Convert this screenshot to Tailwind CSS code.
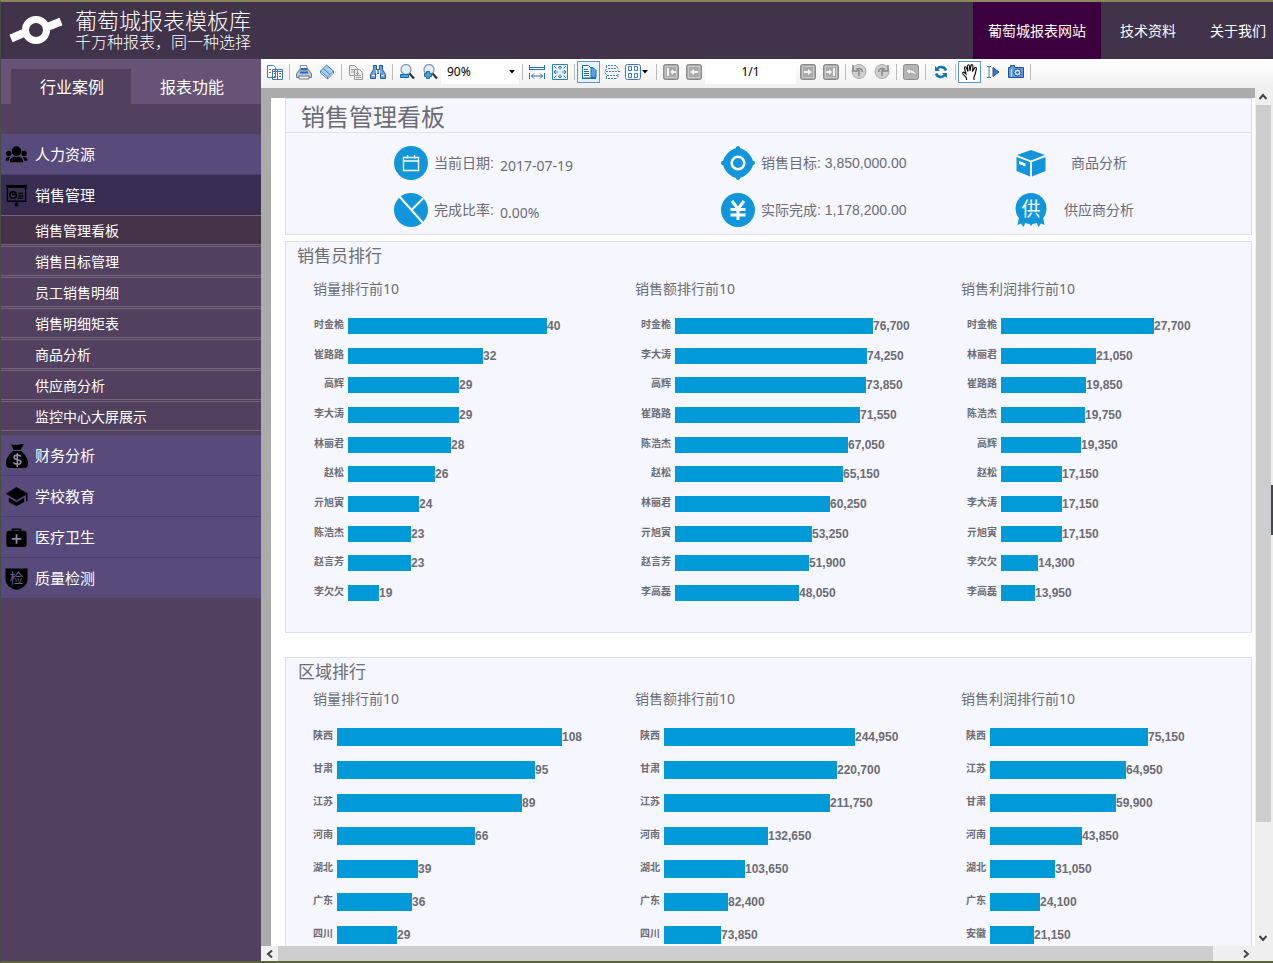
<!DOCTYPE html>
<html lang="zh-CN">
<head>
<meta charset="utf-8">
<title>葡萄城报表模板库</title>
<script src="https://cdn.jsdelivr.net/npm/@tailwindcss/browser@4"></script>
</head>
<body class="relative flex h-screen flex-col overflow-hidden border-t-2 border-b-2 border-l border-t-[#8c8560] border-b-[#5a6338] border-l-[#4a4a48] bg-[#52405f] font-['Noto_Sans','Noto_Sans_CJK_SC',sans-serif] text-sm text-white">

<header class="flex h-[57px] shrink-0 items-stretch justify-between bg-[#413349]">
  <div class="flex items-center gap-3 pl-2">
    <svg class="h-8 w-[54px]" viewBox="0 0 54 32" fill="none" stroke="#fff"><circle cx="27" cy="15" r="10.500" stroke-width="7"/><path d="M2 23.500 17 17M37 12.500 52 6.500" stroke-width="8"/></svg>
    <div class="pb-1 font-['Noto_Sans_CJK_SC',sans-serif] font-light">
      <h1 class="text-[22px] leading-6">葡萄城报表模板库</h1>
      <p class="text-base leading-5">千万种报表，同一种选择</p>
    </div>
  </div>
  <nav class="flex pr-[7px]">
    <a href="#" class="flex items-center bg-[#3d003f] px-[15px]">葡萄城报表网站</a>
    <a href="#" class="ml-[19px] flex items-center">技术资料</a>
    <a href="#" class="ml-[34px] flex items-center">关于我们</a>
  </nav>
</header>

<div class="flex min-h-0 flex-1">
  <aside class="w-[260px] shrink-0 bg-[#52405f]">
    <div class="flex bg-[#665376] px-[10px] pt-[10px] text-base">
      <button class="h-[35px] flex-1 bg-[#52405f] pl-[2px]">行业案例</button>
      <button class="h-[35px] flex-1 pl-[2px]">报表功能</button>
    </div>
    <nav class="pt-[30px] text-[15px]">
      <a href="#" class="flex h-[41px] items-center gap-[7px] border-b border-[#4d3f6b] bg-[#584a7a] pt-px pl-1">
        <svg class="size-[23px]" viewBox="0 0 24 24"><circle cx="12" cy="8.500" r="5"/><circle cx="4" cy="11" r="2.800"/><circle cx="20" cy="11" r="2.800"/><path d="M5 20c0-5 3-5 5-6l2 1 2-1c2 1 5 1 5 6zM.5 18.500c0-3 1-4 4-4l1 .5c-1 1-1.500 2-1.500 3.500zM23.500 18.500c0-3-1-4-4-4l-1 .5c1 1 1.500 2 1.500 3.500z"/></svg>人力资源</a>
      <a href="#" class="flex h-[40px] items-center gap-[7px] bg-[#392d52] pt-px pl-1">
        <svg class="size-[23px]" viewBox="0 0 24 24" fill="none" stroke="#000" stroke-width="1.500"><path d="M1 2.500h22" stroke-width="3"/><path d="M2.500 4v14h19V4M12 18v3M14 10h5M14 12.500h5M13 15h6M8 7.500V11h3.500"/><circle cx="8.500" cy="11.500" r="3.500"/><circle cx="12" cy="21.500" r="1.200"/></svg>销售管理</a>
      <div class="flex flex-col gap-px pb-1 text-sm">
        <a href="#" class="flex h-[30px] items-center border-y border-[#71657a] bg-[#453349] pt-px pl-[34px]">销售管理看板</a>
        <a href="#" class="flex h-[30px] items-center border-y border-[#71657a] pt-px pl-[34px]">销售目标管理</a>
        <a href="#" class="flex h-[30px] items-center border-y border-[#71657a] pt-px pl-[34px]">员工销售明细</a>
        <a href="#" class="flex h-[30px] items-center border-y border-[#71657a] pt-px pl-[34px]">销售明细矩表</a>
        <a href="#" class="flex h-[30px] items-center border-y border-[#71657a] pt-px pl-[34px]">商品分析</a>
        <a href="#" class="flex h-[30px] items-center border-y border-[#71657a] pt-px pl-[34px]">供应商分析</a>
        <a href="#" class="flex h-[30px] items-center border-y border-[#71657a] pt-px pl-[34px]">监控中心大屏展示</a>
      </div>
      <a href="#" class="flex h-[41px] items-center gap-[7px] border-b border-[#4d3f6b] bg-[#584a7a] pt-px pl-1">
        <svg class="-mr-px size-[24px]" viewBox="0 0 24 24"><path d="M6 0c2 1.500 3 .5 5 1 3-.5 5-1 8-1l-3.500 6h-7z"/><path d="M8 7h8c4 3 7 8 7 12 0 3-1 5-4 5H5c-3 0-4-2-4-5 0-4 3-9 7-12z"/><path d="M16 12.500c-1-2-7-2-7 .8 0 3.200 7 1.600 7 4.700 0 3-6.500 3-7.500.3M12.300 9v14" fill="none" stroke="#8f86a8" stroke-width="1.600"/></svg>财务分析</a>
      <a href="#" class="flex h-[41px] items-center gap-[7px] border-b border-[#4d3f6b] bg-[#584a7a] pt-px pl-1">
        <svg class="size-[23px]" viewBox="0 0 24 24"><path d="M12 2 24 9l-12 7L1 9z"/><path d="M4 13v5l8 4 8-4v-5l-8 5zM22 9h1.500v8H22z"/></svg>学校教育</a>
      <a href="#" class="flex h-[41px] items-center gap-[7px] border-b border-[#4d3f6b] bg-[#584a7a] pt-px pl-1">
        <svg class="size-[23px]" viewBox="0 0 24 24"><path d="M8 6V3.500h8V6" fill="none" stroke="#000" stroke-width="2"/><rect x="1.500" y="5" width="21" height="17" rx="3"/><path d="M12 8.500v10M7 13.500h10" stroke="#8f86a8" stroke-width="1.800"/></svg>医疗卫生</a>
      <a href="#" class="flex h-[41px] items-center gap-[7px] border-b border-[#4d3f6b] bg-[#584a7a] pt-px pl-1">
        <svg class="size-[23px]" viewBox="0 0 24 24"><path d="M.5 1.500c5 0 18 0 23 0V12c0 6-4 10-11.500 12C4.500 22 .5 18 .5 12z"/><text x="12" y="17" text-anchor="middle" font-size="14" fill="#6c6090">检</text></svg>质量检测</a>
    </nav>
  </aside>

  <main class="flex min-w-0 flex-1 flex-col bg-[#ababab]">
    <div class="flex h-[29px] shrink-0 items-center bg-linear-to-b from-white to-[#f0f0f0] pb-1 pl-[2px] text-black" id="toolbar">
      <button aria-label="侧边栏" class="flex h-[22px] w-[23px] items-center justify-center"><svg class="size-4" viewBox="0 0 16 16" fill="#fff" stroke="#3d78bd"><path d="M.5 1.500h6l2 2v10h-8zM5.500 5.500h10v10h-10zM10.500 6v9M5.500 7.500h10" /><path d="M2 5.500h2M2 8.500h2M12 9.500h2M7 9.500h2M7 12.500h2M12 12.500h2" stroke="#8a6a6a"/></svg></button>
      <i class="mx-[3px] h-4 w-px bg-[#bcbcbc]"></i>
      <button aria-label="打印" class="flex h-[22px] w-[22px] items-center justify-center"><svg class="size-4" viewBox="0 0 16 16"><path d="M4.500 1.500h6l1.500 5H4z" fill="#fff" stroke="#6c8bb8"/><path d="M3 6h10l2.500 4v3.500H.5V10z" fill="#bcc5d1" stroke="#6e7b8d"/><path d="M4 8.500h8M5 5h6" stroke="#2868c0" stroke-width="2"/><path d="M3 12h10v3H3z" fill="#eef2f8" stroke="#6e7b8d"/></svg></button>
      <button aria-label="页面设置" class="flex h-[22px] w-[23px] items-center justify-center"><svg class="size-4" viewBox="0 0 16 16" fill="#a9cff0" stroke="#4c84bd"><path d="M1.500 7 7.500 1l7 6-6 6z"/><path d="m1.500 7v2l7 6v-2M8.500 15l6-6V7M4 4.500l7 6" fill="none"/></svg></button>
      <i class="mr-[2px] ml-[3px] h-4 w-px bg-[#bcbcbc]"></i>
      <button aria-label="复制" class="flex h-[22px] w-[23px] items-center justify-center"><svg class="size-4" viewBox="0 0 16 16" fill="#eee" stroke="#999"><path d="M1.500 1.500h5l3 3v7h-8zM6.500 5.500h5l3 3v7h-8z"/><path d="M3 5.500h3M3 8h3M8 9.500h3M8 11.500h5M8 13.500h5"/></svg></button>
      <button aria-label="查找" class="flex h-[22px] w-[22px] items-center justify-center"><svg class="size-4" viewBox="0 0 16 16" fill="#6ea3dc" stroke="#2258a0"><path d="M3.500 1.500h3v4h3v-4h3v4l3 5v4h-5v-5h-5v5h-5v-4l3-5z"/><path d="M2 11.500h3M11 11.500h3M6.500 6v4M9.500 6v4" stroke="#fff"/></svg></button>
      <i class="mr-[2px] ml-[3px] h-4 w-px bg-[#bcbcbc]"></i>
      <button aria-label="缩小" class="flex h-[22px] w-[23px] items-center justify-center"><svg class="size-4" viewBox="0 0 16 16"><circle cx="7" cy="5.500" r="5" fill="#e3eefb" stroke="#8d9db1" stroke-width="1.300"/><path d="m10.500 9.500 4.500 5" stroke="#333" stroke-width="2.200"/><path d="M1.500 10.500h8v3h-8z" fill="#4aa5df" stroke="#1667a5"/></svg></button>
      <button aria-label="放大" class="flex h-[22px] w-[23px] items-center justify-center"><svg class="size-4" viewBox="0 0 16 16"><circle cx="7" cy="5.500" r="5" fill="#e3eefb" stroke="#8d9db1" stroke-width="1.300"/><path d="m10.500 9.500 4.500 5" stroke="#333" stroke-width="2.200"/><path d="M4.500 7.500h3v2h2v3h-2v2h-3v-2h-2v-3h2z" fill="#4aa5df" stroke="#1667a5"/></svg></button>
      <label class="relative flex h-[25px] w-[78px] items-center bg-white">
        <select aria-label="缩放" class="w-full appearance-none bg-transparent pl-[6px] text-xs outline-none"><option>90%</option><option>100%</option></select>
        <svg class="absolute right-1 h-1 w-[6px]" viewBox="0 0 6 4"><path d="M0 0h6L3 3.500z"/></svg>
      </label>
      <i class="mr-[2px] ml-[3px] h-4 w-px bg-[#bcbcbc]"></i>
      <button aria-label="适合宽度" class="flex h-[22px] w-[23px] items-center justify-center"><svg class="size-4" viewBox="0 0 16 16" fill="none" stroke="#2a6dab"><path d="M.5 1v5M15.500 1v5M.5 3.500h15M.5 5.500h15M.5 9v6M15.500 9v6M2 12h12M5 9.500 2.500 12 5 14.500M11 9.500l2.500 2.500-2.500 2.500"/></svg></button>
      <button aria-label="适合页面" class="flex h-[22px] w-[23px] items-center justify-center"><svg class="size-4" viewBox="0 0 16 16" fill="#e8f4fd" stroke="#2a7dbb"><path d="M.5.5h15v15H.5z"/><path d="M8 2v4M6 4l2-2 2 2M8 14v-4M6 12l2 2 2-2M2 8h4M4 6 2 8l2 2M14 8h-4M12 6l2 2-2 2M2 2l2.500 2.500M14 2l-2.500 2.500M2 14l2.500-2.500M14 14l-2.500-2.500"/></svg></button>
      <i class="mr-[2px] ml-[3px] h-4 w-px bg-[#bcbcbc]"></i>
      <button aria-label="单页视图" class="flex h-[22px] w-[23px] items-center justify-center border border-[#5a97d8] bg-[#e8f2fc]"><svg class="size-4" viewBox="0 0 16 16" fill="#fff" stroke="#1f68ad"><path d="M9 3.500h3l3 3v7H9z" fill="#56a5e0"/><path d="M1.500 1.500h6l2.500 2.500v10H1.500z"/><path d="M3 5.500h4M3 7.500h5M3 9.500h5M3 11.500h5M1 14.500h14"/></svg></button>
      <button aria-label="连续视图" class="flex h-[22px] w-[23px] items-center justify-center"><svg class="size-4" viewBox="0 0 16 16" fill="none" stroke="#4b7fd0"><path d="M2.500 1v3.500l-2 3.500 2 3v4M12.500 2l1.500 2.500v2M14 10v3l-1.500 1.500" stroke-dasharray="3 1"/><path d="M4 1.500h8M4 4.500h9M2 7.500h14M3 11.500h10M4 14.500h8" stroke-dasharray="2 1"/></svg></button>
      <button aria-label="多页视图" class="flex h-[22px] w-[27px] items-center justify-center gap-px"><svg class="size-4" viewBox="0 0 16 16" fill="#fff" stroke="#3f74c4"><rect x=".5" y=".5" width="15" height="15" rx="2"/><path d="M3.500 2.500h3v4h-3zM9.500 2.500h3v4h-3zM3.500 9.500h3v4h-3zM9.500 9.500h3v4h-3z"/></svg><svg class="h-1 w-[6px]" viewBox="0 0 6 4"><path d="M0 0h6L3 3.500z"/></svg></button>
      <i class="mr-[2px] ml-[6px] h-4 w-px bg-[#bcbcbc]"></i>
      <button aria-label="首页" class="flex h-[22px] w-[23px] items-center justify-center"><svg class="size-4" viewBox="0 0 16 16"><rect x=".5" y=".5" width="15" height="15" rx="2" fill="#a9a9a9" stroke="#888"/><path d="M2.500 2.500h11v11h-11z" fill="none" stroke="#c8c8c8"/><path d="M4 4h2v8H4zM7 8l3-3v2h3v2h-3v2z" fill="#f2f2f2"/></svg></button>
      <button aria-label="上一页" class="flex h-[22px] w-[23px] items-center justify-center"><svg class="size-4" viewBox="0 0 16 16"><rect x=".5" y=".5" width="15" height="15" rx="2" fill="#a9a9a9" stroke="#888"/><path d="M2.500 2.500h11v11h-11z" fill="none" stroke="#c8c8c8"/><path d="m4 8 4-3v2h4v2H8v2z" fill="#f2f2f2"/></svg></button>
      <input aria-label="页码" value="1/1" class="h-[25px] w-[91px] bg-white text-center text-xs outline-none">
      <button aria-label="下一页" class="flex h-[22px] w-[23px] items-center justify-center"><svg class="size-4" viewBox="0 0 16 16"><rect x=".5" y=".5" width="15" height="15" rx="2" fill="#a9a9a9" stroke="#888"/><path d="M2.500 2.500h11v11h-11z" fill="none" stroke="#c8c8c8"/><path d="M12 8 8 5v2H4v2h4v2z" fill="#f2f2f2"/></svg></button>
      <button aria-label="末页" class="flex h-[22px] w-[23px] items-center justify-center"><svg class="size-4" viewBox="0 0 16 16"><rect x=".5" y=".5" width="15" height="15" rx="2" fill="#a9a9a9" stroke="#888"/><path d="M2.500 2.500h11v11h-11z" fill="none" stroke="#c8c8c8"/><path d="M10 4h2v8h-2zM9 8 6 5v2H3v2h3v2z" fill="#f2f2f2"/></svg></button>
      <i class="mr-[2px] ml-[3px] h-4 w-px bg-[#bcbcbc]"></i>
      <button aria-label="后退" class="flex h-[22px] w-[22px] items-center justify-center"><svg class="size-4" viewBox="0 0 16 16"><circle cx="8" cy="7.500" r="7" fill="#cfcfcf" stroke="#aaa"/><path d="M2 1v6h6L6 5c3-1.500 5 0 5.500 3M8 8v4" fill="none" stroke="#888" stroke-width="1.500"/></svg></button>
      <button aria-label="前进" class="flex h-[22px] w-[23px] items-center justify-center"><svg class="size-4" viewBox="0 0 16 16"><circle cx="8" cy="7.500" r="7" fill="#cfcfcf" stroke="#aaa"/><path d="M14 1v6H8l2-2C7 3.500 5 5 4.500 8M8 8v4" fill="none" stroke="#888" stroke-width="1.500"/></svg></button>
      <i class="mx-[3px] h-4 w-px bg-[#bcbcbc]"></i>
      <button aria-label="返回父报表" class="flex h-[22px] w-[22px] items-center justify-center"><svg class="size-4" viewBox="0 0 16 16"><rect x=".5" y=".5" width="15" height="15" rx="2" fill="#b4b4b4" stroke="#8e8e8e"/><path d="m3 7 4-3v2c4 0 6 2 6 6-1-2-3-3-6-3v2z" fill="#f2f2f2" stroke="#8e8e8e" stroke-width=".6"/></svg></button>
      <i class="mx-[3px] h-4 w-px bg-[#bcbcbc]"></i>
      <button aria-label="刷新" class="flex h-[22px] w-[23px] items-center justify-center"><svg class="size-4" viewBox="0 0 16 16" fill="none" stroke="#1b74ad" stroke-width="2.600"><path d="M13 6.500C11.500 2.500 6.500 2 4 5M3 9.500c1.500 4 6.500 4.500 9 1.500"/><path d="M2 2v5h5zM14 14V9H9z" fill="#1b74ad" stroke="none"/></svg></button>
      <i class="mr-[2px] ml-[3px] h-4 w-px bg-[#bcbcbc]"></i>
      <button aria-label="手形工具" class="flex h-[22px] w-[23px] items-center justify-center border border-[#5a97d8] bg-white"><svg class="h-[18px] w-[18px]" viewBox="0 0 18 18" fill="#fff" stroke="#000" stroke-width="1.100"><path d="M5.500 17v-2L2 11c-1-1.500.5-2.500 1.500-1.500L5 11 3.500 5c0-1.600 1.500-1.600 2 0L7 8.500 6.500 3c.2-1.600 1.800-1.600 2 0L9 8l1-5.500c.4-1.400 2-1 2 .5L11.500 8.500 13.500 5c.8-1.200 2.200-.5 1.800 1-.8 3-.5 5-2.300 8v3"/></svg></button>
      <button aria-label="文本选择" class="flex h-[22px] w-[23px] items-center justify-center"><svg class="size-4" viewBox="0 0 16 16"><path d="M2 2.500h2M6 2.500H4v11h2M2 13.500h2" fill="none" stroke="#5a7aa0"/><path d="M8 3.500 14 8l-6 4.500z" fill="#3f7cc4" stroke="#24538e"/></svg></button>
      <button aria-label="快照工具" class="flex h-[22px] w-[23px] items-center justify-center"><svg class="size-4" viewBox="0 0 16 16"><path d="M.5 3.500h2v-2h4v2h9v10H.5z" fill="#5f9cdf" stroke="#1f5299"/><circle cx="9.500" cy="8.500" r="3.500" fill="#d3e6fa" stroke="#1f5299"/><circle cx="9.500" cy="8.500" r="1.200" fill="#1f5299"/><path d="M3.500 5v8" stroke="#cfe3fa"/></svg></button>
      <i class="mx-[3px] h-4 w-px bg-[#bcbcbc]"></i>
    </div>

    <div class="flex min-h-0 flex-1">
      <div class="min-w-0 flex-1 overflow-hidden pt-[10px] pl-[10px]">
        <div class="h-full bg-white pr-[3px] pl-[14px] text-[#6c6c74]">

          <section class="mb-[6px] border border-[#dedee8] bg-[#f6f6fe]">
            <h2 class="h-[34px] border-b border-[#e2e2ec] pl-[15px] font-['Noto_Sans_CJK_SC',sans-serif] text-2xl leading-[34px]">销售管理看板</h2>
            <div class="grid grid-cols-[327fr_293fr_237fr] gap-y-[13px] pt-[13px] pb-[7px] pl-[108px] font-['Liberation_Sans','Noto_Sans_CJK_SC',sans-serif]">
              <div class="flex items-center gap-[6px]">
                <svg class="size-[34px]" viewBox="0 0 34 34" fill="none" stroke="#fff" stroke-width="1.400"><circle cx="17" cy="17" r="17" fill="#1296db" stroke="none"/><path d="M9.500 11.500h15v13h-15zM9.500 15h15M13.500 9v3.500M20.500 9v3.500"/></svg>
                当前日期: <span class="pt-[6px] font-['Noto_Sans',sans-serif]">2017-07-19</span></div>
              <div class="flex items-center gap-[6px]">
                <svg class="size-[34px]" viewBox="0 0 34 34" fill="none"><path d="M17 0c1.500 0 2 1 2.200 2.200C24 3 31 10 31.800 14.800 33 15 34 15.500 34 17s-1 2-2.200 2.200C31 24 24 31 19.200 31.800 19 33 18.500 34 17 34s-2-1-2.200-2.200C10 31 3 24 2.200 19.200 1 19 0 18.500 0 17s1-2 2.200-2.200C3 10 10 3 14.800 2.200 15 1 15.500 0 17 0z" fill="#1296db"/><circle cx="17" cy="17" r="14" fill="#1296db"/><circle cx="17" cy="17" r="6.300" stroke="#fff" stroke-width="2.600"/></svg>
                销售目标: 3,850,000.00</div>
              <div class="flex items-center">
                <svg class="size-[34px]" viewBox="0 0 34 34" fill="#1296db"><path d="M17 4 31 9 17 14.500 3 9zM2.500 11 16 16v14.500L2.500 25zM31.500 11 18 16v14.500L31.500 25z"/><path d="m5 15 6.500 2.500v3L5 18z" fill="#fff"/></svg>
                <a href="#" class="ml-[23px]">商品分析</a></div>
              <div class="flex items-center gap-[6px]">
                <svg class="size-[34px]" viewBox="0 0 34 34" fill="none" stroke="#fff" stroke-width="2"><circle cx="17" cy="17" r="17" fill="#1296db" stroke="none"/><path d="m5 3 24 27M17.500 17 29 5.500"/></svg>
                完成比率: <span class="pt-[6px] font-['Noto_Sans',sans-serif]">0.00%</span></div>
              <div class="flex items-center gap-[6px]">
                <svg class="size-[34px]" viewBox="0 0 34 34" fill="none" stroke="#fff" stroke-width="3"><circle cx="17" cy="17" r="17" fill="#1296db" stroke="none"/><path d="m11 8 6 8 6-8M17 15v12M9.500 16.500h15M9.500 22h15"/></svg>
                实际完成: 1,178,200.00</div>
              <div class="flex items-center">
                <svg class="size-[34px]" viewBox="0 0 34 34" fill="#1296db"><path d="m5 24-1.500 8 3.500-1.500L9.500 34l3-7zM29 24l1.500 8-3.500-1.500-2.500 3.500-3-7zM14 29h6l-3 4z"/><circle cx="17" cy="15.500" r="15.500"/><text x="17" y="22.500" text-anchor="middle" font-size="19" fill="#fff">供</text></svg>
                <a href="#" class="ml-4">供应商分析</a></div>
            </div>
          </section>

          <section class="mb-6 border border-[#dedee8] bg-[#f6f6fe] pb-6">
            <h2 class="pl-[11px] font-['Noto_Sans_CJK_SC',sans-serif] text-[17px] leading-[25px]">销售员排行</h2>
            <div class="grid grid-cols-[326fr_326fr_290fr] pt-[11px] pl-[23px]" data-charts="people"></div>
          </section>

          <section class="border border-[#dedee8] bg-[#f6f6fe] pb-10">
            <h2 class="pl-3 font-['Noto_Sans_CJK_SC',sans-serif] text-[17px] leading-[25px]">区域排行</h2>
            <div class="grid grid-cols-[326fr_326fr_290fr] pt-[5px] pl-[23px]" data-charts="region"></div>
          </section>
        </div>
      </div>
      <div class="flex w-[18px] shrink-0 flex-col items-center bg-[#efefef] pr-[2px]">
        <button aria-label="向上滚动" class="flex h-[17px] w-full items-center justify-center"><svg class="size-2" viewBox="0 0 8 8" fill="none" stroke="#444" stroke-width="2"><path d="m.5 6 3.500-4 3.500 4"/></svg></button>
        <div class="min-h-0 w-[15px] flex-1"><div class="h-[87%] bg-[#cdcdcd]"></div></div>
        <button aria-label="向下滚动" class="flex h-[17px] w-full items-center justify-center"><svg class="size-2" viewBox="0 0 8 8" fill="none" stroke="#444" stroke-width="2"><path d="m.5 2 3.500 4 3.500-4"/></svg></button>
      </div>
    </div>
    <div class="flex h-[15px] shrink-0 items-center bg-[#efefef] pr-[19px]">
      <button aria-label="向左滚动" class="flex h-full w-[17px] items-center justify-center"><svg class="size-2" viewBox="0 0 8 8" fill="none" stroke="#444" stroke-width="2"><path d="M6 .5 2 4l4 3.500"/></svg></button>
      <div class="h-full flex-1"><div class="h-full w-[97.5%] bg-[#cdcdcd]"></div></div>
      <button aria-label="向右滚动" class="flex h-full w-[17px] items-center justify-center"><svg class="size-2" viewBox="0 0 8 8" fill="none" stroke="#444" stroke-width="2"><path d="m2 .5 4 3.500-4 3.500"/></svg></button>
    </div>
  </main>
</div>
<div class="absolute top-[483px] right-0 h-[50px] w-[2px] bg-[#3c4654]"></div>

<script>
// Each row is [name, shown value, bar length].
const data = {
  people: [
    ['销量排行前10', [['时金桅','40',199],['崔路路','32',135],['高辉','29',111],['李大涛','29',111],['林丽君','28',103],['赵松','26',87],['亓旭寅','24',71],['陈浩杰','23',63],['赵言芳','23',63],['李欠欠','19',31]]],
    ['销售额排行前10', [['时金桅','76,700',198],['李大涛','74,250',192],['高辉','73,850',191],['崔路路','71,550',185],['陈浩杰','67,050',173],['赵松','65,150',168],['林丽君','60,250',155],['亓旭寅','53,250',137],['赵言芳','51,900',134],['李高磊','48,050',124]]],
    ['销售利润排行前10', [['时金桅','27,700',153],['林丽君','21,050',95],['崔路路','19,850',85],['陈浩杰','19,750',84],['高辉','19,350',80],['赵松','17,150',61],['李大涛','17,150',61],['亓旭寅','17,150',61],['李欠欠','14,300',37],['李高磊','13,950',34]]]
  ],
  region: [
    ['销量排行前10', [['陕西','108',225],['甘肃','95',198],['江苏','89',185],['河南','66',138],['湖北','39',81],['广东','36',75],['四川','29',60]]],
    ['销售额排行前10', [['陕西','244,950',191],['甘肃','220,700',173],['江苏','211,750',166],['河南','132,650',104],['湖北','103,650',81],['广东','82,400',64],['四川','73,850',57]]],
    ['销售利润排行前10', [['陕西','75,150',158],['江苏','64,950',136],['甘肃','59,900',126],['河南','43,850',92],['湖北','31,050',65],['广东','24,100',50],['安徽','21,150',44]]]
  ]
};
const style = {
  people: { list: 'flex flex-col h-[297px] mt-[11px]', name: 'w-[31px] mr-1', bar: 'h-4' },
  region: { list: 'flex flex-col h-[231px] mt-[10px]', name: 'w-[20px] mr-1', bar: 'h-[18px]' }
};
for (const key in data) {
  const s = style[key];
  document.querySelector('[data-charts=' + key + ']').innerHTML = data[key].map(([title, rows], i) =>
    `<div><h3 class="${i ? '' : 'pl-1'} font-['Noto_Sans','Noto_Sans_CJK_SC',sans-serif] text-sm leading-[22px]">${title}</h3><ul class="${s.list} ${i ? 'pl-[5px]' : 'pl-1'}">` +
    rows.map(([n, v, w]) => `<li class="flex flex-1 items-center"><span class="${s.name} pb-1 whitespace-nowrap text-right font-['Noto_Sans_CJK_SC',sans-serif] text-[10px] leading-4 font-bold">${n}</span><span class="${s.bar} bg-[#009ad8]" style="width:${w}px"></span><span class="font-['Liberation_Sans',sans-serif] text-xs font-bold">${v}</span></li>`).join('') +
    '</ul></div>').join('');
}
</script>
</body>
</html>
